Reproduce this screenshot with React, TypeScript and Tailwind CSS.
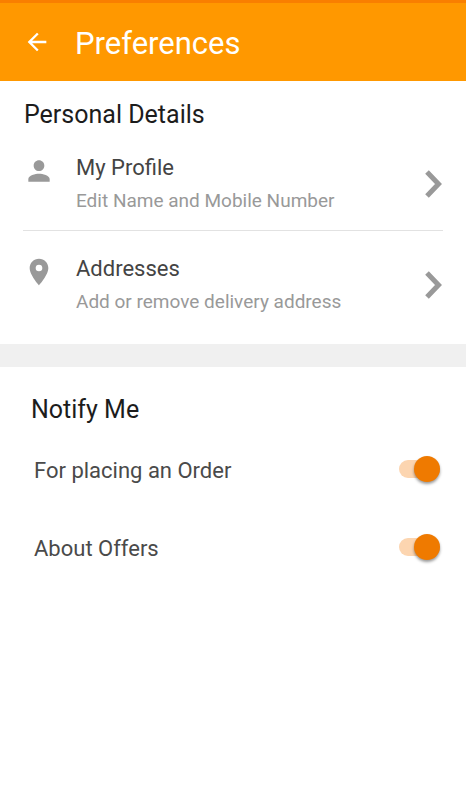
import React, { useState } from 'react';

interface DetailLinkProps {
  title: string;
  description: string;
  href: string;
  iconPath: string;
}

interface NotifySwitchProps {
  id: string;
  label: string;
}

const PERSON_PATH =
  'M12 12c2.21 0 4-1.79 4-4s-1.79-4-4-4-4 1.79-4 4 1.79 4 4 4zm0 2c-2.67 0-8 1.34-8 4v2h16v-2c0-2.66-5.33-4-8-4z';
const PLACE_PATH =
  'M12 2C8.13 2 5 5.13 5 9c0 5.25 7 13 7 13s7-7.75 7-13c0-3.87-3.13-7-7-7zm0 9.5a2.5 2.5 0 0 1 0-5 2.5 2.5 0 0 1 0 5z';

const details: DetailLinkProps[] = [
  {
    title: 'My Profile',
    description: 'Edit Name and Mobile Number',
    href: '#profile',
    iconPath: PERSON_PATH
  },
  {
    title: 'Addresses',
    description: 'Add or remove delivery address',
    href: '#addresses',
    iconPath: PLACE_PATH
  }
];

const notifications: NotifySwitchProps[] = [
  { id: 'notify-order', label: 'For placing an Order' },
  { id: 'notify-offers', label: 'About Offers' }
];

const DetailLink: React.FC<DetailLinkProps> = ({ title, description, href, iconPath }) => {
  return (
    <a href={href} className="flex items-center gap-[21px] pt-6 pb-[17px]">
      <svg viewBox="0 0 24 24" className="mt-px h-8 w-8 shrink-0 self-start fill-[#999999]" aria-hidden="true">
        <path d={iconPath} />
      </svg>
      <span className="flex min-w-0 flex-1 flex-col gap-[7px]">
        <span className="text-[22px] leading-7 text-[#444444]">{title}</span>
        <span className="text-[19px] leading-6 text-[#999999]">{description}</span>
      </span>
      <svg viewBox="0 0 18 30" className="h-[30px] w-[18px] shrink-0" aria-hidden="true">
        <path d="M2 3 L13.5 15 L2 27" fill="none" stroke="#999999" strokeWidth="5" />
      </svg>
    </a>
  );
};

const NotifySwitch: React.FC<NotifySwitchProps> = ({ id, label }) => {
  const [enabled, setEnabled] = useState(true);

  return (
    <label htmlFor={id} className="flex h-[78px] cursor-pointer items-center justify-between">
      <span className="pt-1 text-[22px] leading-7 text-[#4a4a4a]">{label}</span>
      <input
        id={id}
        type="checkbox"
        role="switch"
        className="peer sr-only"
        checked={enabled}
        onChange={(e) => setEnabled(e.target.checked)}
      />
      <span className="flex h-[18px] w-[41px] items-center rounded-full bg-gray-300 transition-colors peer-checked:justify-end peer-checked:bg-[#fcd5b0] peer-focus-visible:ring-2 peer-focus-visible:ring-orange-300">
        <span
          className={`h-[26px] w-[26px] rounded-full shadow-[0_2px_3px_rgba(0,0,0,0.4)] ${
            enabled ? 'bg-[#ef7a00]' : 'bg-gray-100'
          }`}
        />
      </span>
    </label>
  );
};

const App: React.FC = () => {
  return (
    <div className="min-h-screen bg-white font-[Roboto,sans-serif]">
      <header className="flex h-[81px] items-center gap-6 border-t-3 border-[#f97f00] bg-[#ff9800] px-[23px]">
        <button type="button" aria-label="Back" className="cursor-pointer">
          <svg viewBox="0 0 24 24" className="h-7 w-7 fill-white" aria-hidden="true">
            <path d="M20 11H7.83l5.59-5.59L12 4l-8 8 8 8 1.41-1.41L7.83 13H20v-2z" />
          </svg>
        </button>
        <h1 className="pt-1 text-[31px] leading-10 text-white">Preferences</h1>
      </header>

      <main>
        <section className="px-[23px] pt-[19px] pb-[13px]">
          <h2 className="pl-px text-[25px] leading-[30px] text-[#1c1c1c]">Personal Details</h2>
          <ul className="divide-y divide-[#e2e2e2]">
            {details.map((item) => (
              <li key={item.title}>
                <DetailLink {...item} />
              </li>
            ))}
          </ul>
        </section>

        <div className="h-[23px] bg-[#f0f0f0]" />

        <section className="pt-7 pr-[26px] pl-[31px]">
          <h2 className="mb-[5px] text-[25px] leading-[30px] text-[#1c1c1c]">Notify Me</h2>
          <div className="pl-[3px]">
            {notifications.map((item) => (
              <NotifySwitch key={item.id} {...item} />
            ))}
          </div>
        </section>
      </main>
    </div>
  );
};

export default App;
